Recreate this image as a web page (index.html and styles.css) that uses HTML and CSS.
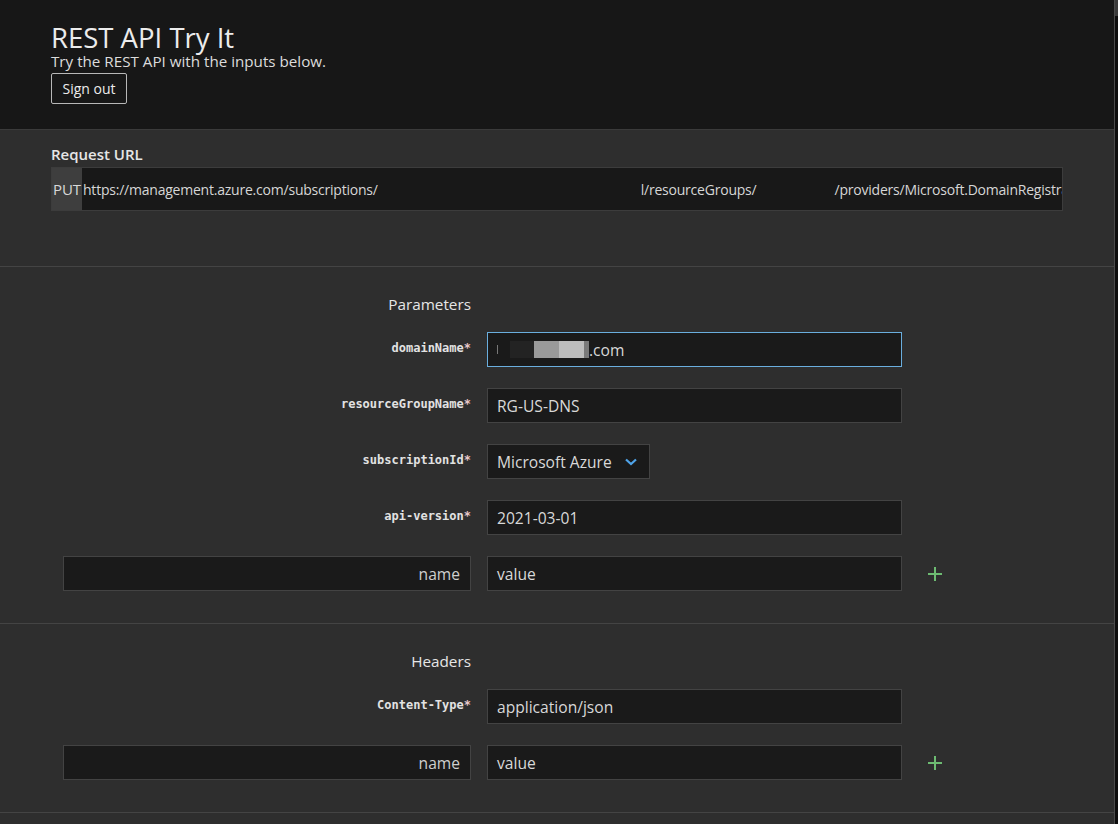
FILE: index.html
```html
<!DOCTYPE html>
<html lang="en">
<head>
<meta charset="utf-8">
<title>REST API Try It</title>
<link rel="stylesheet" href="styles.css">
</head>
<body>
<div class="page">
  <header class="top">
    <h1 class="title">REST API Try It</h1>
    <p class="subtitle">Try the REST API with the inputs below.</p>
    <button class="btn-outline">Sign out</button>
  </header>

  <section class="panel url-panel">
    <div class="panel-label">Request URL</div>
    <div class="url-box">
      <span class="method">PUT</span>
      <span class="url-text">https://management.azure.com/subscriptions/<span class="redact r1"></span>l/resourceGroups/<span class="redact r2"></span>/providers/Microsoft.DomainRegistra</span>
    </div>
  </section>

  <section class="panel form-panel">
    <div class="form-head">Parameters</div>
    <div class="rows">
      <div class="row">
        <label class="field-label">domainName<span class="req">*</span></label>
        <div class="input focused">
          <span class="blur b1"></span><span class="blur b2"></span><span class="blur b3"></span><span class="blur b4"></span><span class="blur b5"></span>.com
        </div>
      </div>
      <div class="row">
        <label class="field-label">resourceGroupName<span class="req">*</span></label>
        <div class="input">RG-US-DNS</div>
      </div>
      <div class="row">
        <label class="field-label">subscriptionId<span class="req">*</span></label>
        <div class="select">Microsoft Azure
          <svg class="chev" width="12" height="8" viewBox="0 0 12 8"><path d="M1 1.5 L6 6 L11 1.5" fill="none" stroke="#4fa3e8" stroke-width="2.2"/></svg>
        </div>
      </div>
      <div class="row">
        <label class="field-label">api-version<span class="req">*</span></label>
        <div class="input">2021-03-01</div>
      </div>
      <div class="row">
        <div class="input name-input">name</div>
        <div class="input">value</div>
        <svg class="plus" width="14" height="14" viewBox="0 0 14 14"><path d="M7 0 V14 M0 7 H14" stroke="#6dbb72" stroke-width="2"/></svg>
      </div>
    </div>
  </section>

  <section class="panel form-panel">
    <div class="form-head">Headers</div>
    <div class="rows">
      <div class="row">
        <label class="field-label">Content-Type<span class="req">*</span></label>
        <div class="input">application/json</div>
      </div>
      <div class="row">
        <div class="input name-input">name</div>
        <div class="input">value</div>
        <svg class="plus" width="14" height="14" viewBox="0 0 14 14"><path d="M7 0 V14 M0 7 H14" stroke="#6dbb72" stroke-width="2"/></svg>
      </div>
    </div>
  </section>

  <section class="panel tail"></section>
</div>
<div class="scrollbar"><div class="thumb"></div></div>
</body>
</html>
```

FILE: styles.css
```css
html, body {
  margin: 0;
  padding: 0;
}
body {
  display: flex;
  width: 1118px;
  height: 824px;
  overflow: hidden;
  background: #101010;
  font-family: "Open Sans", "Noto Sans", sans-serif;
  color: #e6e6e6;
}
.page {
  width: 1115px;
  flex: none;
  border-right: 1px solid #4a4a4a;
  box-sizing: border-box;
  background: #2e2e2e;
}
.scrollbar {
  width: 3px;
  flex: none;
  background: #0d0d0d;
}
.thumb {
  height: 16px;
  background: #3a3a3a;
}

/* header */
.top {
  height: 130px;
  box-sizing: border-box;
  background: #171717;
  border-bottom: 1px solid #3b3b3b;
  padding: 23px 51px 0;
}
.title {
  margin: 0;
  font-size: 27.5px;
  line-height: 30px;
  font-weight: 400;
  color: #ececec;
}
.subtitle {
  margin: 0;
  font-size: 15.2px;
  line-height: 17px;
  color: #dcdcdc;
}
.btn-outline {
  margin-top: 3px;
  width: 76px;
  height: 31px;
  padding: 0;
  background: transparent;
  border: 1px solid #b8b8b8;
  border-radius: 2px;
  color: #ececec;
  font-family: inherit;
  font-size: 14px;
  font-weight: 500;
}

/* panels */
.panel {
  border-bottom: 1px solid #444;
  background: #2e2e2e;
}
.url-panel {
  height: 137px;
  box-sizing: border-box;
  padding: 14px 51px 0;
}
.panel-label {
  font-size: 15px;
  line-height: 20px;
  font-weight: 600;
  color: #e6e6e6;
  margin-bottom: 3px;
}
.url-box {
  width: 1012px;
  height: 44px;
  box-sizing: border-box;
  display: flex;
  align-items: stretch;
  background: #181818;
  border: 1px solid #3c3c3c;
  overflow: hidden;
  white-space: nowrap;
}
.method {
  flex: none;
  width: 30px;
  display: flex;
  align-items: center;
  justify-content: center;
  background: #3e3e3e;
  color: #d8d8d8;
  font-size: 15px;
}
.url-text {
  display: flex;
  align-items: center;
  padding-left: 1px;
  font-size: 14px;
  color: #d6d6d6;
  letter-spacing: -0.22px;
}
.redact {
  display: inline-block;
  height: 1px;
}
.r1 { width: 263px; }
.r2 { width: 78px; }

/* form panels */
.form-panel {
  padding: 26px 0 32px 63px;
}
.form-head {
  width: 408px;
  text-align: right;
  font-size: 15.3px;
  line-height: 22px;
  font-weight: 500;
  color: #e6e6e6;
  margin-bottom: 17px;
}
.rows {
  display: flex;
  flex-direction: column;
  gap: 21px;
}
.row {
  display: grid;
  grid-template-columns: 408px 415px 14px;
  column-gap: 16px;
  align-items: center;
}
.row .plus {
  margin-left: 10px;
}
.field-label {
  text-align: right;
  font-family: "DejaVu Sans Mono", monospace;
  font-weight: 700;
  font-size: 12px;
  color: #e2e2e2;
  padding-bottom: 4px;
}
.req {
  color: #e9c9c9;
}
.input, .select {
  height: 35px;
  box-sizing: border-box;
  display: flex;
  align-items: center;
  padding: 0 9px;
  background: #1a1a1a;
  border: 1px solid #434343;
  font-size: 15.6px;
  color: #d8d8d8;
  white-space: nowrap;
}
.input.focused {
  border-color: #6aaede;
}
.name-input {
  justify-content: flex-end;
  color: #cfcfcf;
  padding-right: 10px;
}
.select {
  width: 163px;
  gap: 13px;
}
.chev {
  flex: none;
}
.blur {
  display: inline-block;
  height: 17px;
}
.b1 { width: 1px; height: 9px; background: #777; margin-right: 12px; }
.b2 { width: 24px; background: #232323; }
.b3 { width: 25px; background: #9a9a9a; }
.b4 { width: 25px; background: #bdbdbd; }
.b5 { width: 5px; background: #7a7a7a; }

.tail {
  height: 40px;
  border-bottom: none;
}
```
